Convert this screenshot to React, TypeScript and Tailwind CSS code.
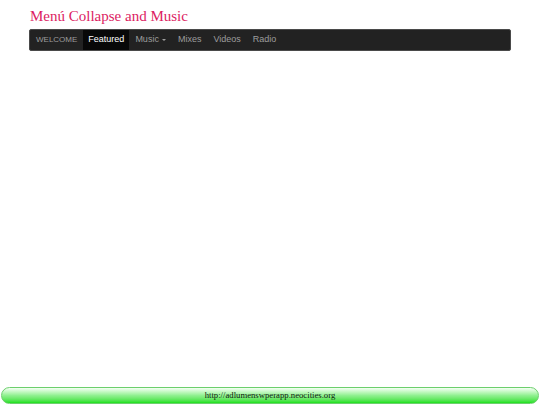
const navItems = ["Music", "Mixes", "Videos", "Radio"];

export default function App() {
  return (
    <div className="flex h-screen flex-col bg-white">
      {/* Title */}
      <h1
        className="ml-[30px] mt-[6px] text-[15px] leading-[20px] text-[#dc1c62]"
        style={{ fontFamily: '"Liberation Serif", serif' }}
      >
        Menú Collapse and Music
      </h1>

      {/* Navbar */}
      <nav
        className="mx-[29px] mt-[3px] flex h-[22px] items-stretch rounded-[2px] border border-[#4a4a4a] bg-[#222222] text-[9px] text-[#9d9d9d]"
        style={{ fontFamily: '"Liberation Sans", Arial, sans-serif' }}
      >
        <span className="flex items-center pl-[6px] pr-[6px] text-[8px]">WELCOME</span>
        <span className="flex items-center bg-[#080808] px-[5px] text-white">Featured</span>
        {navItems.map((item) => (
          <span key={item} className="flex items-center px-[6px]">
            {item}
            {item === "Music" && (
              <span className="ml-[3px] inline-block h-0 w-0 border-x-[2px] border-t-[2px] border-x-transparent border-t-[#9d9d9d]" />
            )}
          </span>
        ))}
      </nav>

      {/* Footer */}
      <footer
        className="mx-[1px] mb-[1px] mt-auto flex h-[17px] items-center justify-center rounded-full border border-[#6ccf6c] bg-gradient-to-b from-[#f4fff4] via-[#8ff08f] to-[#14e014] text-[8.7px] text-[#0e1a0e]"
        style={{ fontFamily: '"Liberation Serif", serif' }}
      >
        http://adlumenswperapp.neocities.org
      </footer>
    </div>
  );
}
